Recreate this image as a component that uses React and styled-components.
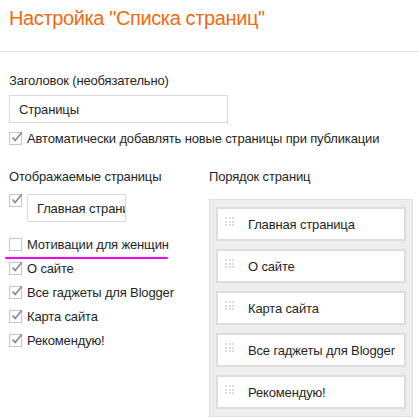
import React from 'react'
import styled, {createGlobalStyle} from 'styled-components'

const GlobalStyle = createGlobalStyle`
body {
  margin: 0;
  background: #fff;
  font-family: "Liberation Sans", Arial, sans-serif;
  font-size: 13px;
  letter-spacing: -0.15px;
  color: #1f1f1f;
}
`

const Header = styled.div`
height: 52px;
border-bottom: 1px solid #e5e5e5;
padding: 6px 9px 0 9px;
box-sizing: border-box;
`

const Title = styled.h1`
margin: 0;
font-size: 20px;
font-weight: normal;
letter-spacing: -0.38px;
color: #f06a0f;
line-height: 24px;
`

const Body = styled.div`
padding: 21px 9px 0 9px;
`

const Label = styled.div`
line-height: 16px;
`

const TextInput = styled.div`
width: ${p => p.width}px;
height: 28px;
box-sizing: border-box;
border: 1px solid #d9d9d9;
padding: 0 9px;
display: flex;
align-items: center;
white-space: nowrap;
overflow: hidden;
margin-top: ${p => p.top || 0}px;
`

const CheckRow = styled.div`
position: relative;
display: flex;
align-items: ${p => p.top ? 'flex-start' : 'center'};
gap: 5px;
height: ${p => p.h || 24}px;
`

const Box = styled.span`
position: relative;
width: 13px;
height: 13px;
box-sizing: border-box;
border: 1px solid #c6c6c6;
background: #fff;
flex: none;
svg {
  position: absolute;
  left: 1px;
  top: -2px;
}
`

const Mark = styled.div`
position: absolute;
left: -4px;
bottom: -3px;
width: 163px;
height: 2.5px;
border-radius: 2px;
background: #f000ee;
`

const Columns = styled.div`
display: grid;
grid-template-columns: 200px 1fr;
margin-top: 16px;
`

const Col = styled.div`
display: flex;
flex-direction: column;
`

const Panel = styled.div`
margin-top: 14px;
width: 204px;
box-sizing: border-box;
background: #eeeeee;
border: 1px solid #e0e0e0;
padding: 7px 6px 7px 6px;
display: flex;
flex-direction: column;
gap: 8px;
`

const Item = styled.div`
height: 34px;
box-sizing: border-box;
background: #fff;
border: 2px solid #dddddd;
display: flex;
align-items: center;
padding-left: 7px;
`

const Handle = styled.div`
display: grid;
grid-template-columns: repeat(3, 2px);
grid-auto-rows: 2px;
gap: 1.5px;
margin: -5px 14px 0 0;
span {
  background: #dcdcdc;
}
`

const Check = ({checked}) => (
  <Box>
    {checked && (
      <svg width="12" height="12" viewBox="0 0 12 12">
        <path d="M1.5 6.5 L4.2 9.5 L10.8 1.2" fill="none" stroke="#8a8a8a" strokeWidth="1.6" />
      </svg>
    )}
  </Box>
)

const pages = [
  {name: 'Мотивации для женщин', checked: false, mark: true},
  {name: 'О сайте', checked: true},
  {name: 'Все гаджеты для Blogger', checked: true},
  {name: 'Карта сайта', checked: true},
  {name: 'Рекомендую!', checked: true},
]

const order = ['Главная страница', 'О сайте', 'Карта сайта', 'Все гаджеты для Blogger', 'Рекомендую!']

const App = () => {
  return (
    <>
      <GlobalStyle />
      <Header>
        <Title>Настройка "Списка страниц"</Title>
      </Header>
      <Body>
        <Label>Заголовок (необязательно)</Label>
        <TextInput width={219} top={6}>Страницы</TextInput>
        <CheckRow h={30}>
          <Check checked />
          <span>Автоматически добавлять новые страницы при публикации</span>
        </CheckRow>
        <Columns>
          <Col>
            <Label>Отображаемые страницы</Label>
            <CheckRow top h={38} style={{marginTop: 9}}>
              <Check checked />
              <TextInput width={99}>Главная страница</TextInput>
            </CheckRow>
            {pages.map(p => (
              <CheckRow key={p.name}>
                <Check checked={p.checked} />
                <span>{p.name}</span>
                {p.mark && <Mark />}
              </CheckRow>
            ))}
          </Col>
          <Col>
            <Label>Порядок страниц</Label>
            <Panel>
              {order.map(name => (
                <Item key={name}>
                  <Handle>
                    {Array.from({length: 9}).map((_, i) => <span key={i} />)}
                  </Handle>
                  {name}
                </Item>
              ))}
            </Panel>
          </Col>
        </Columns>
      </Body>
    </>
  )
}

export default App
